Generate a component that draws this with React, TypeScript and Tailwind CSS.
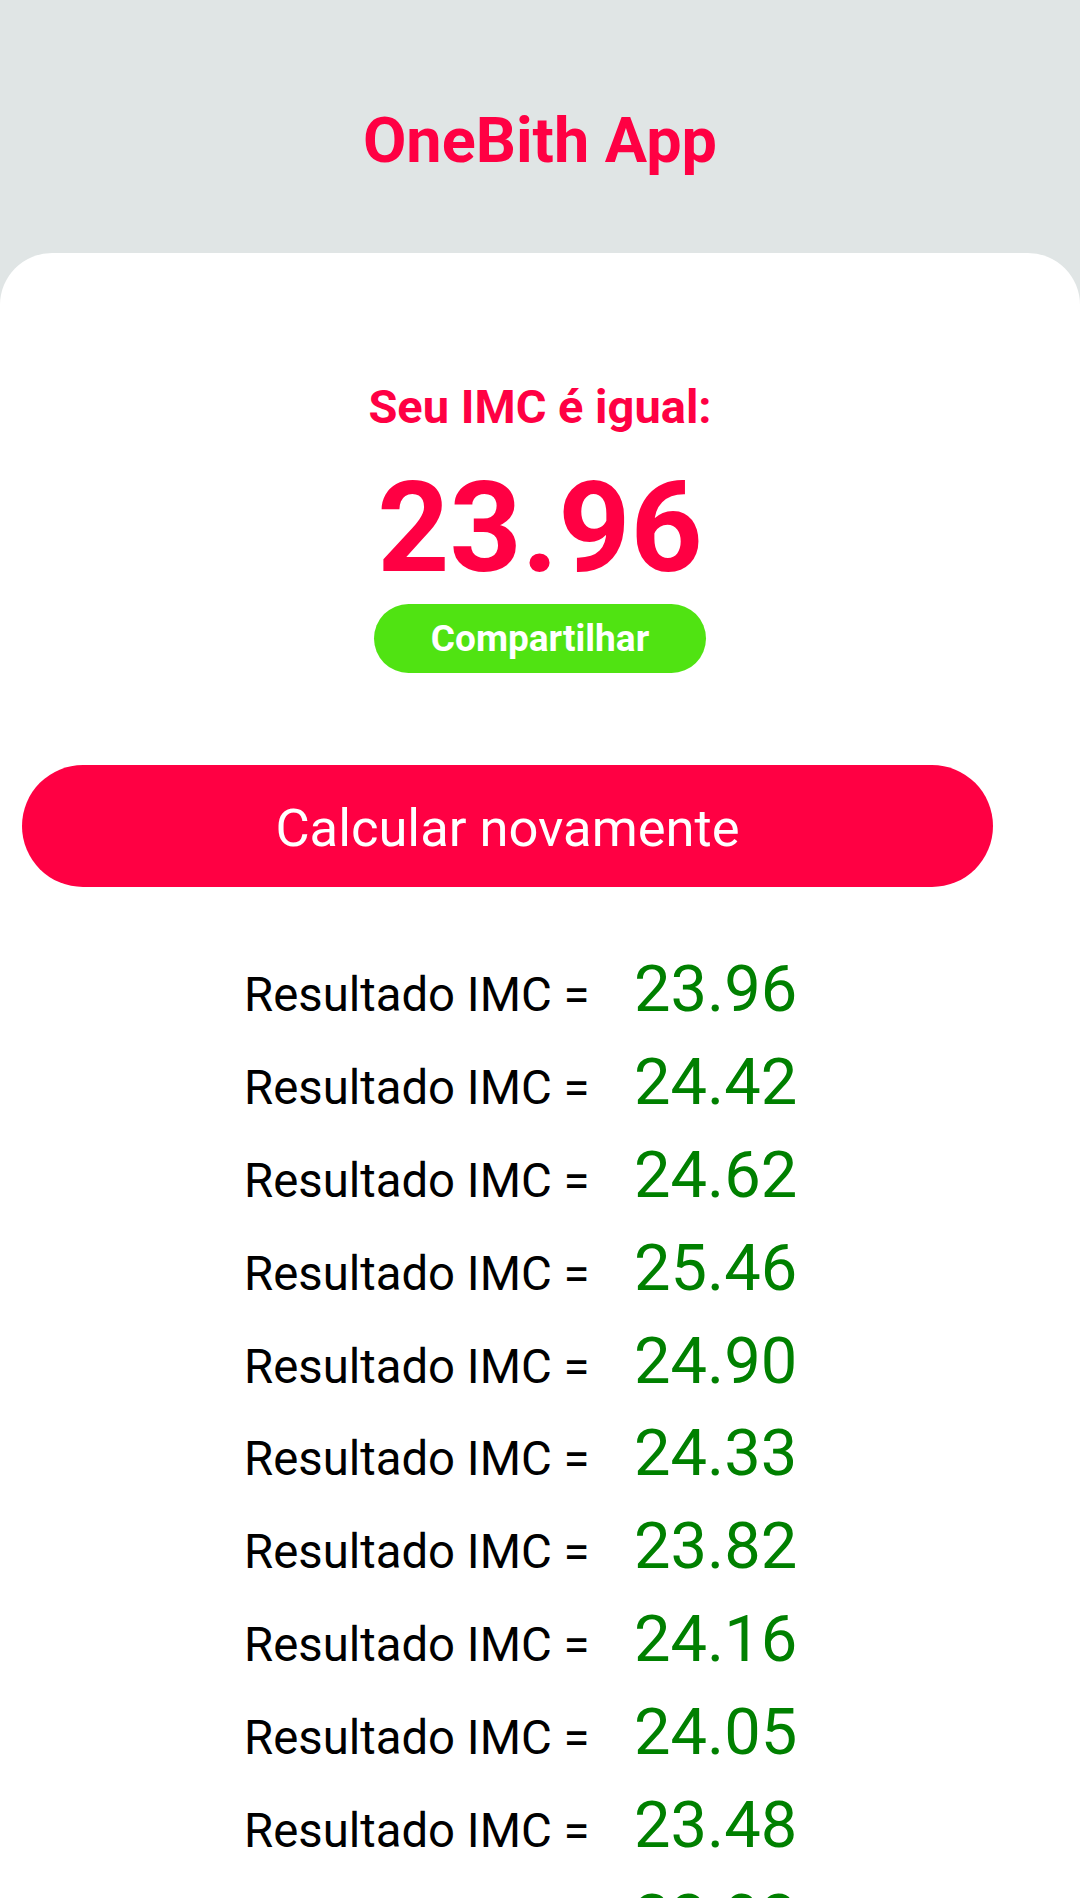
import React from "react";

const results = [
  "23.96",
  "24.42",
  "24.62",
  "25.46",
  "24.90",
  "24.33",
  "23.82",
  "24.16",
  "24.05",
  "23.48",
  "23.93",
];

export default function App() {
  return (
    <div className="h-[1898px] overflow-hidden bg-[#e0e5e5] font-['Roboto',sans-serif]">
      <div className="h-[253px] pt-[104px]">
        <h1 className="text-center text-[63px] leading-[74px] font-bold text-[#ff0043]">
          OneBith App
        </h1>
      </div>
      <div className="flex min-h-[1645px] flex-col rounded-t-[52px] bg-white pt-[127px]">
        <p className="text-center text-[47px] leading-[54px] font-bold text-[#ff0043]">
          Seu IMC é igual:
        </p>
        <p className="mt-[20px] text-center text-[126px] leading-[148px] font-bold text-[#ff0043]">
          23.96
        </p>
        <div className="mt-[2px] flex justify-center">
          <button className="flex h-[69px] w-[332px] items-center justify-center rounded-full bg-[#50e312] text-[37px] font-bold text-white">
            Compartilhar
          </button>
        </div>
        <button className="mt-[92px] ml-[22px] flex h-[122px] w-[971px] items-center justify-center rounded-full bg-[#ff0043] pt-[4px] text-[52.5px] text-white">
          Calcular novamente
        </button>
        <div className="mt-[56px] flex flex-col">
          {results.map((r, i) => (
            <div key={i} className="flex h-[92.9px] items-baseline pl-[244px]">
              <span className="w-[390px] text-[47.3px] leading-[92.9px] text-black">
                Resultado IMC =
              </span>
              <span className="text-[65px] leading-[92.9px] text-[#008000]">{r}</span>
            </div>
          ))}
        </div>
      </div>
    </div>
  );
}
